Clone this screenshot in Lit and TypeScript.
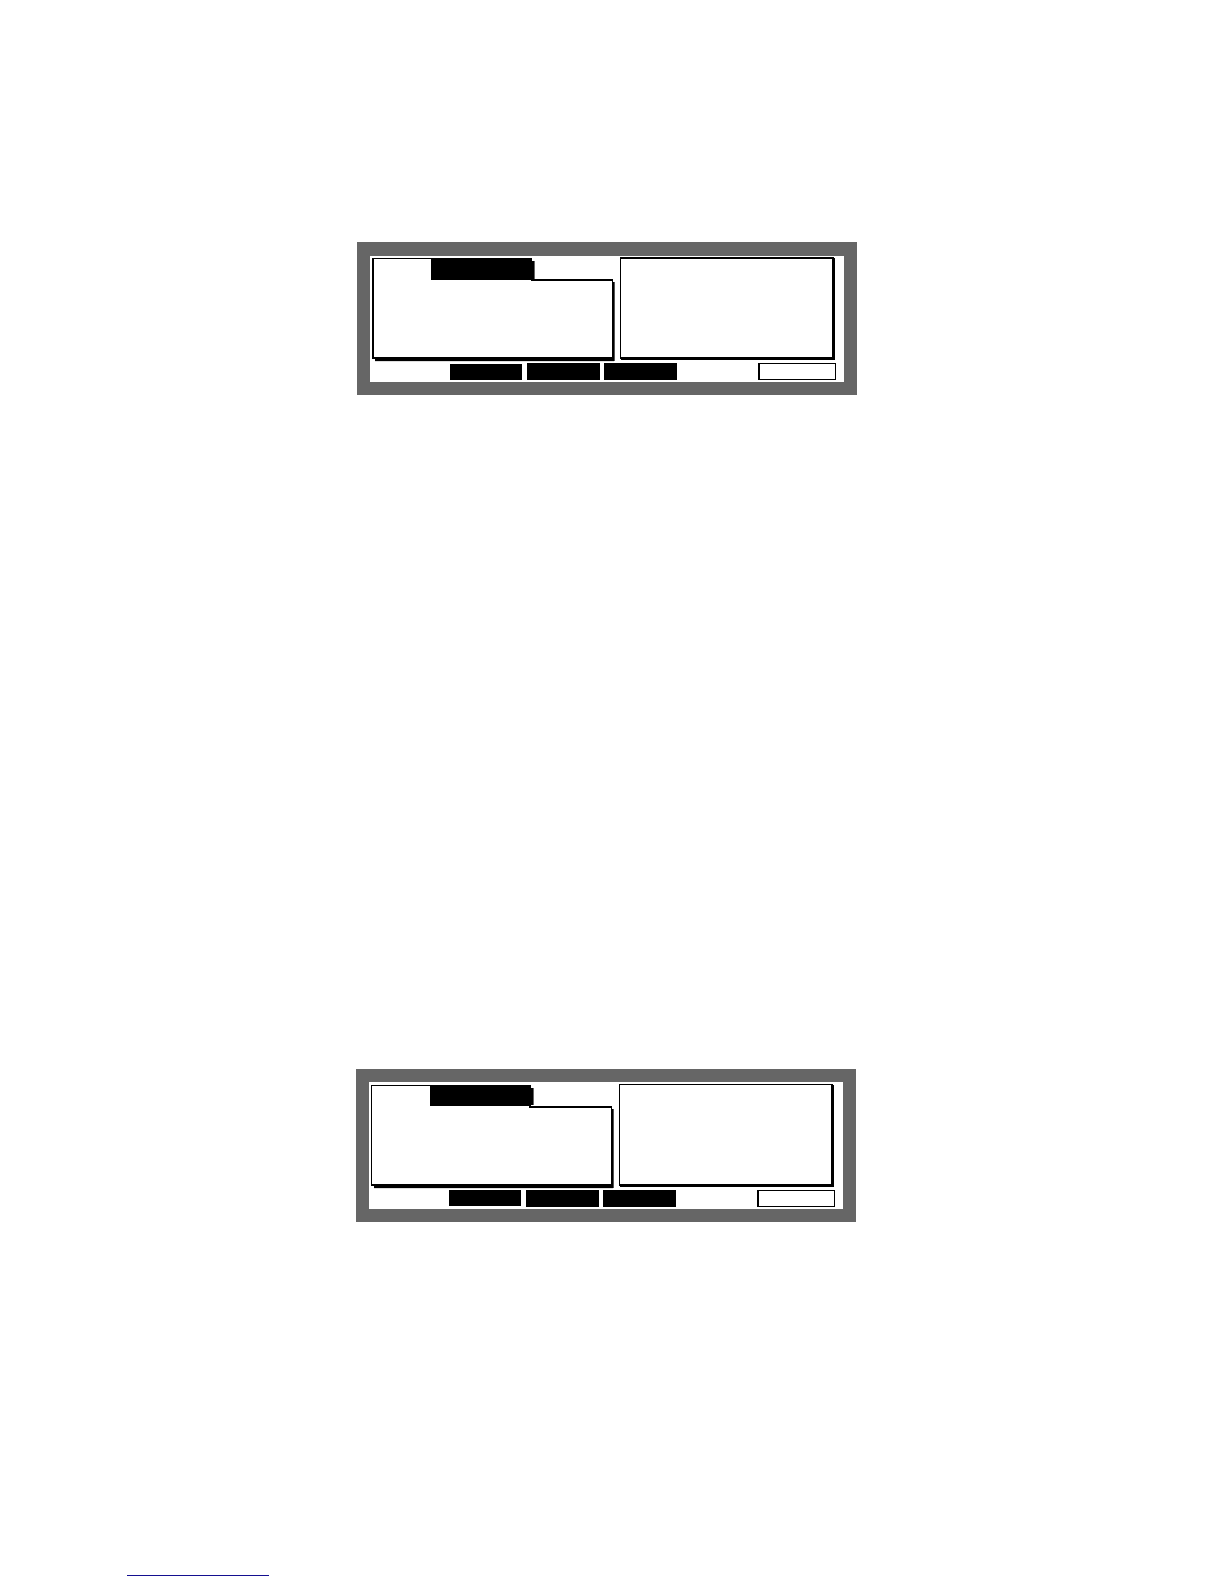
import { LitElement, html, css } from 'lit';
import { customElement, property } from 'lit/decorators.js';

@customElement('lcd-screen')
export class LcdScreen extends LitElement {
  @property({ type: Boolean, reflect: true }) thin = false;

  static styles = css`
    :host {
      --line: 2px;
      display: block;
      width: 100%;
      max-width: 500px;
      box-sizing: border-box;
      padding: 14px 13px 13px;
      background: #666;
    }

    :host([thin]) {
      --line: 1px;
      padding-top: 13px;
    }

    * {
      box-sizing: border-box;
    }

    .display {
      background: #fff;
      padding: 1px 0 2px;
    }

    :host([thin]) .display {
      padding-top: 2px;
    }

    .windows {
      display: grid;
      grid-template-columns: 241fr 214fr;
      gap: 7px;
      align-items: end;
      padding: 0 10px 0 2px;
    }

    .folder {
      display: flex;
      flex-direction: column;
      min-height: 101px;
    }

    .tabs {
      display: grid;
      grid-template-columns: 59fr 101fr 81fr;
      height: 23px;
    }

    .label {
      border-top: 1px solid #000;
      border-left: var(--line) solid #000;
    }

    .tab {
      height: 22px;
      padding: 0;
      border: none;
      border-radius: 0;
      background: #000;
      box-shadow: 4px 1px 0 -2px #000, 5px 1px 0 -2px #666;
    }

    :host([thin]) .tab {
      height: 21px;
    }

    .rest {
      margin-left: -1px;
      border-bottom: 2px solid #000;
    }

    :host([thin]) .rest {
      margin-left: -2px;
    }

    .body {
      flex: 1;
      background: #fff;
      border: solid #000;
      border-width: 0 1px 2px var(--line);
      box-shadow: 2px 0 0 -1px #000, 2px 3px 0 -1px #000,
        3px 0 0 -1px #555, 3px 3px 0 -1px #555, 2px 4px 0 -1px #ddd;
    }

    .window {
      min-height: 102px;
      border: solid #000;
      border-width: var(--line) 2px 2px 1px;
      box-shadow: 1px 1px 0 #000;
    }

    .keys {
      display: grid;
      grid-template-columns: repeat(5, 73fr) 78fr;
      gap: 4px;
      align-items: end;
      margin-top: 4px;
      padding: 0 8px 0 3px;
    }

    .key {
      height: 17px;
      padding: 0;
      border: none;
      border-radius: 0;
      background: #000;
    }

    .key.first {
      grid-column: 2;
      height: 16px;
      margin-right: 1px;
    }

    :host([thin]) .key.first {
      align-self: start;
    }

    .key.outline {
      grid-column: 6;
      background: #fff;
      border: 1px solid #000;
      border-left-width: 2px;
    }
  `;

  render() {
    return html`
      <div class="display">
        <div class="windows">
          <div class="folder">
            <div class="tabs">
              <div class="label"></div>
              <button class="tab" aria-label="Tab"></button>
              <div class="rest"></div>
            </div>
            <div class="body"></div>
          </div>
          <div class="window"></div>
        </div>
        <div class="keys">
          <button class="key first" aria-label="Key 2"></button>
          <button class="key" aria-label="Key 3"></button>
          <button class="key" aria-label="Key 4"></button>
          <button class="key outline" aria-label="Key 6"></button>
        </div>
      </div>
    `;
  }
}

@customElement('app-root')
export class AppRoot extends LitElement {
  static styles = css`
    :host {
      display: flex;
      flex-direction: column;
      box-sizing: border-box;
      min-height: 100vh;
      padding: 242px 0 8px;
      background: #fff;
      font-family: 'Liberation Sans', Arial, sans-serif;
    }

    .row {
      display: flex;
      justify-content: center;
      padding-right: 10px;
    }

    .row + .row {
      margin-top: 674px;
      padding-right: 12px;
    }

    .link {
      width: 142px;
      height: 16px;
      margin-top: auto;
      margin-left: 127px;
      border-bottom: 1px solid #140f90;
    }
  `;

  render() {
    return html`
      <div class="row"><lcd-screen></lcd-screen></div>
      <div class="row"><lcd-screen thin></lcd-screen></div>
      <a class="link" href="#" aria-label="Home"></a>
    `;
  }
}
